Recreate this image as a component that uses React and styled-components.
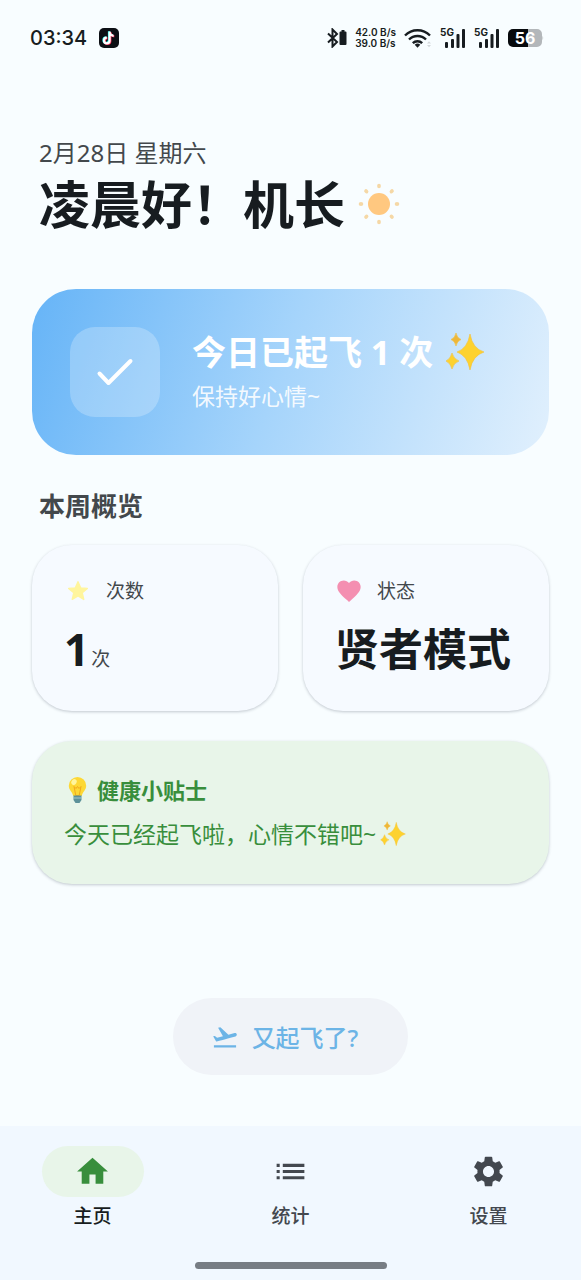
import React, { useState } from 'react';
import styled, { createGlobalStyle } from 'styled-components';
import { MdFavorite, MdFlightTakeoff, MdHome, MdList, MdSettings } from 'react-icons/md';

const GlobalStyle = createGlobalStyle`
  * { box-sizing: border-box; }
  body {
    margin: 0;
    background: #f8fdff;
    color: #171c20;
    font-family: 'Noto Sans', 'Noto Sans CJK SC', sans-serif;
  }
  h1, h2, p { margin: 0; }
  svg { display: block; flex: none; }
`;

const Page = styled.div`
  min-height: 100vh;
  display: flex;
  flex-direction: column;
`;

/* ---------- status bar ---------- */
const StatusBar = styled.header`
  display: flex;
  align-items: center;
  justify-content: space-between;
  height: 76px;
  padding: 0 37px 0 30px;
  font-family: Inter, 'Noto Sans', sans-serif;
`;

const StatusGroup = styled.div`
  display: flex;
  align-items: center;
  gap: ${({ $gap }) => $gap}px;
`;

const Clock = styled.span`
  font-size: 20px;
  font-weight: 500;
`;

const NetSpeed = styled.div`
  font-size: 10px;
  line-height: 11px;
  font-weight: 600;
`;

/* ---------- content ---------- */
const Main = styled.main`
  flex: 1;
  display: flex;
  flex-direction: column;
  padding: 63px 32px 0;
`;

const Greeting = styled.section`
  padding: 0 7px;
`;

const DateText = styled.p`
  font-size: 24px;
  line-height: 28px;
  color: #43484c;
`;

const Title = styled.h1`
  display: flex;
  align-items: center;
  gap: 13px;
  font-size: 51px;
  line-height: 74px;
  font-weight: 700;
`;

const Hero = styled.section`
  display: flex;
  align-items: center;
  gap: 32px;
  margin-top: 48px;
  padding: 38px;
  border-radius: 44px;
  background: linear-gradient(108deg, #66b4f7 0%, #a5d4fb 48%, #e1f0fd 100%);
  color: #fff;
`;

const CheckTile = styled.div`
  display: grid;
  place-items: center;
  width: 90px;
  height: 90px;
  border-radius: 25px;
  background: rgba(255, 255, 255, 0.24);
`;

const HeroTitle = styled.h2`
  display: flex;
  align-items: center;
  gap: 12px;
  font-size: 34px;
  line-height: 44px;
  font-weight: 700;
`;

const HeroNote = styled.p`
  margin-top: 4px;
  font-size: 23px;
  line-height: 36px;
  color: rgba(255, 255, 255, 0.9);
`;

const SectionTitle = styled.h2`
  margin: 32px 7px 20px;
  font-size: 26px;
  line-height: 38px;
  font-weight: 700;
  color: #43484c;
`;

const Stats = styled.section`
  display: grid;
  grid-template-columns: 1fr 1fr;
  gap: 25px;
`;

const Card = styled.div`
  padding: 32px;
  border-radius: 40px;
  background: ${({ $tone }) => $tone || '#f6faff'};
  box-shadow: 0 1px 3px rgba(40, 50, 70, 0.26);
`;

const StatLabel = styled.div`
  display: flex;
  align-items: center;
  gap: 14px;
  font-size: 19px;
  line-height: 28px;
  color: #43484c;
`;

const StatValue = styled.div`
  display: flex;
  align-items: baseline;
  gap: 2px;
  margin-top: 14px;
  font-size: 44px;
  line-height: 60px;
  font-weight: 700;
  white-space: nowrap;
`;

const Unit = styled.span`
  font-size: 19px;
  line-height: 28px;
  font-weight: 400;
  color: #43484c;
`;

const TipCard = styled(Card)`
  margin-top: 30px;
  color: #388e3c;
`;

const TipTitle = styled.h2`
  display: flex;
  align-items: center;
  gap: 6px;
  font-size: 22px;
  line-height: 34px;
  font-weight: 700;
`;

const TipText = styled.p`
  display: flex;
  align-items: center;
  gap: 4px;
  margin-top: 9px;
  font-size: 23px;
  line-height: 36px;
`;

const FlyButton = styled.button`
  display: flex;
  align-items: center;
  gap: 13px;
  align-self: center;
  margin: auto 0 51px;
  height: 77px;
  padding: 0 50px 0 38px;
  border: 0;
  border-radius: 39px;
  background: #f0f3f8;
  color: #6cb4e6;
  font: 500 24px 'Noto Sans', 'Noto Sans CJK SC', sans-serif;
  cursor: pointer;
`;

/* ---------- bottom navigation ---------- */
const Bottom = styled.footer`
  display: flex;
  flex-direction: column;
  align-items: center;
  background: #f1f8ff;
  padding: 20px 0 11px;
`;

const Nav = styled.nav`
  display: grid;
  grid-template-columns: repeat(3, 1fr);
  gap: 13px;
  width: 100%;
`;

const NavItem = styled.button`
  display: flex;
  flex-direction: column;
  align-items: center;
  gap: 5px;
  padding: 0;
  border: 0;
  background: none;
  color: ${({ $active }) => ($active ? '#171c20' : '#43484f')};
  font: 500 19px/28px 'Noto Sans', 'Noto Sans CJK SC', sans-serif;
  cursor: pointer;
`;

const NavPill = styled.span`
  display: grid;
  place-items: center;
  width: 102px;
  height: 51px;
  border-radius: 26px;
  background: ${({ $active }) => ($active ? '#e8f5e9' : 'transparent')};
  color: ${({ $active }) => ($active ? '#388e3c' : 'inherit')};
`;

const GestureBar = styled.div`
  width: 192px;
  height: 7px;
  margin-top: 32px;
  border-radius: 4px;
  background: #777d84;
`;

/* ---------- drawings ---------- */
const NOTE = 'M10.6 3.6v8.9a2.8 2.8 0 1 1-2.8-2.8M10.6 4c.2 2.2 1.8 3.6 4 3.8';

const TikTokIcon = () => (
  <svg width="20" height="20" viewBox="0 0 20 20">
    <rect width="20" height="20" rx="5" fill="#0c0f14" />
    <g fill="none" strokeWidth="2.2">
      <path d={NOTE} stroke="#25f4ee" transform="translate(-.6 -.4)" />
      <path d={NOTE} stroke="#fe2c55" transform="translate(.7 .5)" />
      <path d={NOTE} stroke="#fff" />
    </g>
  </svg>
);

const BluetoothIcon = () => (
  <svg width="21" height="20" viewBox="0 0 21 20">
    <path d="M2 5.5l9 8.5-4.5 4.5v-17L11 6l-9 8.5" fill="none" stroke="#171c20" strokeWidth="2" />
    <path d="M14.5 3.5h1V2h3v1.5h1a1 1 0 0 1 1 1V16a1 1 0 0 1-1 1h-5a1 1 0 0 1-1-1V4.5a1 1 0 0 1 1-1z" fill="#171c20" />
  </svg>
);

const WifiIcon = () => (
  <svg width="28" height="22" viewBox="0 0 28 22">
    <g fill="none" stroke="#171c20" strokeWidth="2.4">
      <path d="M1 8.5a17.5 17.5 0 0 1 25 0" />
      <path d="M5 12.5a12 12 0 0 1 17 0" />
      <path d="M8.8 16.2a6.8 6.8 0 0 1 9.4 0" />
    </g>
    <path d="M10.7 17.8a4 4 0 0 1 5.600 0l-2.800 2.900z" fill="#171c20" />
    <path d="M23 16.5l2-2.300 2 2.300zM23 18l2 2.300 2-2.300z" fill="#d4d8dc" />
  </svg>
);

const SignalIcon = () => (
  <svg width="26" height="22" viewBox="0 0 26 22">
    <text x="0" y="9" fontSize="10" fontWeight="700" fontFamily="Inter, sans-serif" fill="#171c20">5G</text>
    <g fill="#171c20">
      <rect x="5" y="15" width="3" height="6" rx="1" />
      <rect x="11" y="12" width="3" height="9" rx="1" />
      <rect x="16.5" y="7" width="3" height="14" rx="1" />
      <rect x="22" y="2" width="3" height="19" rx="1" />
    </g>
  </svg>
);

const BatteryIcon = () => (
  <svg width="36" height="20" viewBox="0 0 36 20">
    <path d="M20 1h9a5 5 0 0 1 5 5v8a5 5 0 0 1-5 5h-9zM34.5 7.5q1.5 2.500 0 5z" fill="#b3b7ba" />
    <path d="M20 1H5a5 5 0 0 0-5 5v8a5 5 0 0 0 5 5h15z" fill="#070a0d" />
    <text x="17" y="16" fontSize="16" fontWeight="700" textAnchor="middle" fontFamily="Inter, sans-serif" fill="#fff">56</text>
  </svg>
);

const RAYS = [0, 45, 90, 135, 180, 225, 270, 315];

const SunIcon = () => (
  <svg width="42" height="42" viewBox="0 0 42 42">
    <circle cx="21" cy="21" r="11" fill="#ffc880" />
    {RAYS.map((deg) => (
      <ellipse key={deg} cx="21" cy="3" rx="1.9" ry="2.3" fill="#f5d8a6" transform={`rotate(${deg} 21 21)`} />
    ))}
  </svg>
);

const StarIcon = () => (
  <svg width="28" height="28" viewBox="-3 -3 30 30">
    <path
      d="M12 17.27L18.18 21l-1.64-7.03L22 9.24l-7.19-.61L12 2 9.190 8.630 2 9.240l5.460 4.730L5.820 21z"
      fill="#fff59d"
      stroke="#fff59d"
      strokeWidth="1.500"
      strokeLinejoin="round"
    />
  </svg>
);

const SparklesIcon = ({ size }) => (
  <svg width={size} height={size} viewBox="0 0 40 40">
    <g fill="#fdd22f" stroke="#f4c03a" strokeWidth=".6">
      <path d="M25 2Q27.500 16.500 39 20Q27.500 23.500 25 38Q22.500 23.500 12 20Q22.500 16.500 25 2z" />
      <path d="M11 1Q12 6 16 7.500Q12 9 11 14Q10 9 6 7.500Q10 6 11 1z" fill="#eeb73a" />
      <path d="M7 21Q8.500 27 14 29Q8.500 31 7 37Q5.500 31 1 29Q5.500 27 7 21z" />
    </g>
  </svg>
);

const BulbIcon = () => (
  <svg width="27" height="28" viewBox="0 0 27 28">
    <path d="M13.5 1a8.7 8.7 0 0 0-8.7 8.7c0 4.5 3.7 6 4.4 10.3h8.6c.7-4.3 4.4-5.8 4.4-10.3A8.7 8.7 0 0 0 13.5 1z" fill="#fdd835" />
    <path d="M10 10.5l2 2 1.5-2 1.5 2 2-2-1.8 9h-3.4z" fill="none" stroke="#f2a91c" strokeWidth="1" />
    <ellipse cx="10" cy="6" rx="2.5" ry="3" fill="#fff59d" transform="rotate(35 10 6)" />
    <path d="M9.5 19.5h8V24l-2 3h-4l-2-3z" fill="#5c9199" />
    <path d="M9.5 22h8" stroke="#a6c8cb" />
  </svg>
);

const CheckIcon = () => (
  <svg width="38" height="30" viewBox="0 0 38 30">
    <path d="M3.5 16.5l9 9.5L34.5 4" fill="none" stroke="#fff" strokeWidth="4" strokeLinecap="round" strokeLinejoin="round" />
  </svg>
);

const tabs = [
  { id: 'home', label: '主页', Icon: MdHome },
  { id: 'stats', label: '统计', Icon: MdList },
  { id: 'settings', label: '设置', Icon: MdSettings },
];

export default function App() {
  const [tab, setTab] = useState('home');

  return (
    <Page>
      <GlobalStyle />
      <StatusBar>
        <StatusGroup $gap={12}>
          <Clock>03:34</Clock>
          <TikTokIcon />
        </StatusGroup>
        <StatusGroup $gap={8}>
          <BluetoothIcon />
          <NetSpeed>
            <div>42.0 B/s</div>
            <div>39.0 B/s</div>
          </NetSpeed>
          <WifiIcon />
          <SignalIcon />
          <SignalIcon />
          <BatteryIcon />
        </StatusGroup>
      </StatusBar>

      <Main>
        <Greeting>
          <DateText>2月28日 星期六</DateText>
          <Title>凌晨好！机长<SunIcon /></Title>
        </Greeting>

        <Hero>
          <CheckTile><CheckIcon /></CheckTile>
          <div>
            <HeroTitle>今日已起飞 1 次<SparklesIcon size={40} /></HeroTitle>
            <HeroNote>保持好心情~</HeroNote>
          </div>
        </Hero>

        <SectionTitle>本周概览</SectionTitle>
        <Stats>
          <Card>
            <StatLabel><StarIcon />次数</StatLabel>
            <StatValue>1<Unit>次</Unit></StatValue>
          </Card>
          <Card>
            <StatLabel><MdFavorite size={28} color="#f48fb1" />状态</StatLabel>
            <StatValue>贤者模式</StatValue>
          </Card>
        </Stats>

        <TipCard $tone="#e8f5e9">
          <TipTitle><BulbIcon />健康小贴士</TipTitle>
          <TipText>今天已经起飞啦，心情不错吧~<SparklesIcon size={26} /></TipText>
        </TipCard>

        <FlyButton type="button"><MdFlightTakeoff size={28} />又起飞了?</FlyButton>
      </Main>

      <Bottom>
        <Nav>
          {tabs.map(({ id, label, Icon }) => (
            <NavItem key={id} type="button" $active={tab === id} onClick={() => setTab(id)}>
              <NavPill $active={tab === id}><Icon size={37} /></NavPill>
              {label}
            </NavItem>
          ))}
        </Nav>
        <GestureBar />
      </Bottom>
    </Page>
  );
}
